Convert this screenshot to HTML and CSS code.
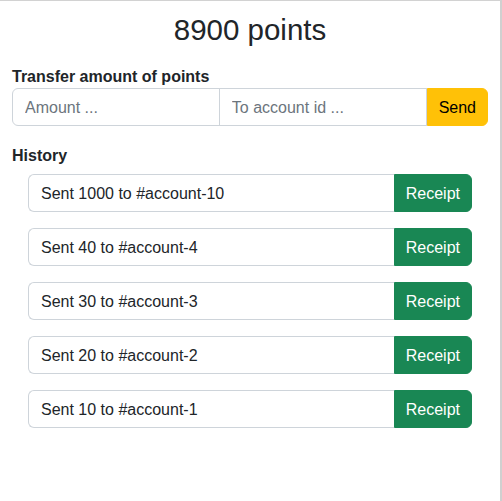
FILE: index.html
```html
<!DOCTYPE html>
<html lang="en">
<head>
<meta charset="utf-8">
<title>Points</title>
<link rel="stylesheet" href="styles.css">
</head>
<body>
<div class="frame">
  <main class="container">
    <h1 class="title">8900 points</h1>
    <form class="transfer">
      <label class="field-label" for="amount">Transfer amount of points</label>
      <div class="input-group">
        <input id="amount" class="control" type="text" placeholder="Amount ...">
        <input class="control" type="text" placeholder="To account id ...">
        <button type="button" class="btn btn-warning">Send</button>
      </div>
    </form>
    <h2 class="section-label">History</h2>
    <ul class="history">
      <li class="history-row"><span class="history-text">Sent 1000 to #account-10</span><button type="button" class="btn btn-success">Receipt</button></li>
      <li class="history-row"><span class="history-text">Sent 40 to #account-4</span><button type="button" class="btn btn-success">Receipt</button></li>
      <li class="history-row"><span class="history-text">Sent 30 to #account-3</span><button type="button" class="btn btn-success">Receipt</button></li>
      <li class="history-row"><span class="history-text">Sent 20 to #account-2</span><button type="button" class="btn btn-success">Receipt</button></li>
      <li class="history-row"><span class="history-text">Sent 10 to #account-1</span><button type="button" class="btn btn-success">Receipt</button></li>
    </ul>
  </main>
</div>
</body>
</html>
```
FILE: styles.css
```css
* {
  box-sizing: border-box;
}

html, body {
  margin: 0;
  padding: 0;
  background: #ffffff;
}

body {
  font-family: "Liberation Sans", Arial, sans-serif;
  font-size: 16px;
  line-height: 1.5;
  color: #212529;
}

.frame {
  width: 502px;
  min-height: 501px;
  border-top: 1px solid #d2d2d2;
  border-right: 2px solid #d0d0d0;
}

.container {
  padding: 11px 12px 0;
  display: flex;
  flex-direction: column;
}

.title {
  margin: 0 0 16px;
  font-size: 29.5px;
  line-height: 36px;
  font-weight: 500;
  text-align: center;
}

.transfer {
  margin: 0;
  display: flex;
  flex-direction: column;
}

.field-label,
.section-label {
  font-size: 16px;
  font-weight: 700;
  line-height: 23px;
  padding-top: 1px;
}

.section-label {
  margin: 17px 0 7px;
}

.input-group {
  display: flex;
  height: 38px;
}

.control {
  flex: 1 1 0;
  min-width: 0;
  height: 38px;
  padding: 7px 12px 5px;
  font: inherit;
  color: #212529;
  background: #fff;
  border: 1px solid #ced4da;
  border-radius: 0;
  outline: none;
}

.control::placeholder {
  color: #6c757d;
}

.control:first-child {
  border-radius: 6px 0 0 6px;
}

.control + .control {
  margin-left: -1px;
}

.btn {
  font: inherit;
  line-height: 24px;
  padding: 7px 11px 5px;
  border: 1px solid transparent;
  border-radius: 0 6px 6px 0;
  cursor: pointer;
}

.btn-warning {
  background: #ffc107;
  border-color: #ffc107;
  color: #000;
}

.btn-success {
  background: #198754;
  border-color: #198754;
  color: #fff;
}

.history {
  list-style: none;
  margin: 0;
  padding: 0 16px;
  display: flex;
  flex-direction: column;
  gap: 16px;
}

.history-row {
  display: flex;
  height: 38px;
}

.history-text {
  flex: 1 1 auto;
  padding: 7px 12px 5px;
  border: 1px solid #ced4da;
  border-right: 0;
  border-radius: 6px 0 0 6px;
  white-space: nowrap;
}
```
